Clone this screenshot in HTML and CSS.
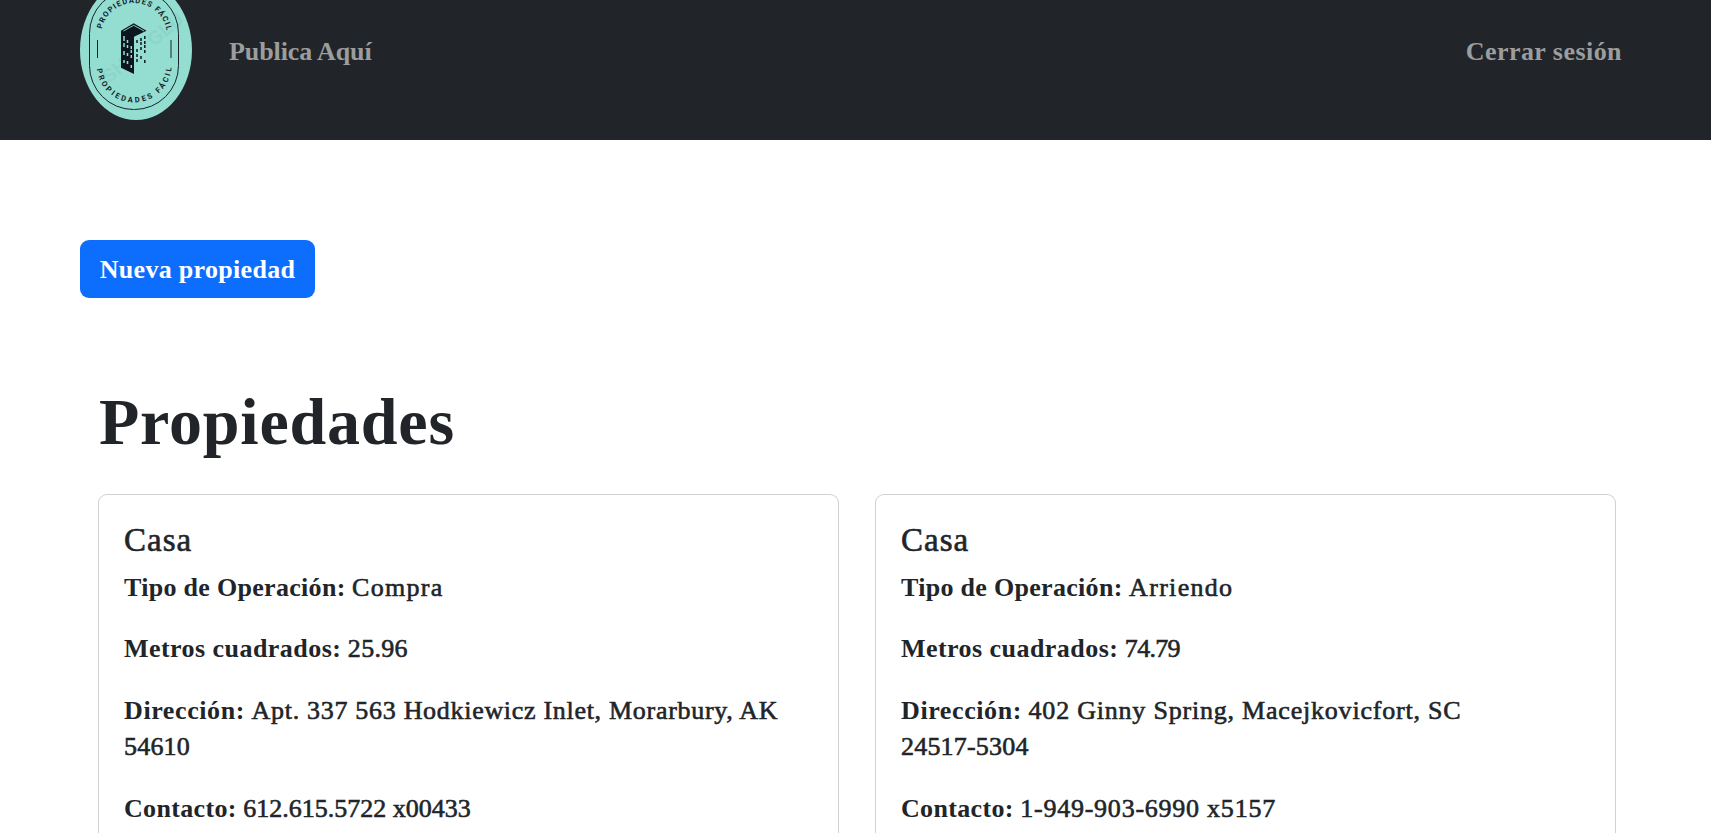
FILE: index.html
```html
<!DOCTYPE html>
<html lang="es">
<head>
<meta charset="utf-8">
<title>Propiedades</title>
<link rel="stylesheet" href="styles.css">
</head>
<body>
<nav class="navbar">
  <a class="brand" href="#">
    <svg class="logo" viewBox="80 -20 112 140" role="img" aria-label="Propiedades Fácil">
      <defs>
        <path id="arc-top" d="M101 36A33 33 0 0 1 167 36"/>
        <path id="arc-bottom" d="M96.500 65A37.500 37.500 0 0 0 171.500 65"/>
      </defs>
      <ellipse cx="136" cy="50" rx="56" ry="70" fill="#94ddd1"/>
      <text class="watermark" transform="translate(109 84) rotate(-40)">SH</text>
      <text class="watermark" transform="translate(154 47) rotate(-40)">GLU</text>
      <rect x="89.500" y="-10.500" width="89" height="120" rx="44" fill="none" stroke="#16242c"/>
      <path d="M97.500 40v18M171 40v18" stroke="#16242c"/>
      <text class="logo-text"><textPath href="#arc-top" startOffset="7" textLength="91">PROPIEDADES FÁCIL</textPath></text>
      <text class="logo-text"><textPath href="#arc-bottom" startOffset="4" textLength="111">PROPIEDADES FÁCIL</textPath></text>
      <path d="M121 30.700 133.700 23.300 146.500 30.700 134 36.700V74L121 67.700Z" fill="#0d1520"/>
      <path d="M123.500 31 133.700 25.300 144 31" fill="none" stroke="#94ddd1" stroke-width=".9"/>
      <path d="M124 36v5M124 43v4M124 51v4M124 60v3M127.500 40v3M127.500 45v3M127.500 53v3M127.500 61v3M131.300 46v3M131.300 50v3M131.300 55v3M131.300 65v3" stroke="#94ddd1" stroke-width="1.500"/>
      <path d="M137 40v3M137 49v3M137 54v3M137 59v3M141 38v3M141 42v3M141 47v3M141 56v3M144.800 36v3M144.800 41v3M144.800 45v3M144.800 50v3M144.800 60v3" stroke="#0d1520" stroke-width="1.500"/>
    </svg>
  </a>
  <a class="nav-link publish" href="#">Publica Aquí</a>
  <a class="nav-link logout" href="#">Cerrar sesión</a>
</nav>
<main class="page">
  <a class="button" href="#">Nueva propiedad</a>
  <section class="listing">
    <h1 class="title">Propiedades</h1>
    <div class="cards">
      <article class="card">
        <h2 class="card-title">Casa</h2>
        <p class="field operation"><b>Tipo de Operación:</b> <span>Compra</span></p>
        <p class="field area"><b>Metros cuadrados:</b> <span>25.96</span></p>
        <p class="field address"><b>Dirección:</b> <span>Apt. 337 563 Hodkiewicz Inlet, Morarbury, AK</span><br><span class="zip">54610</span></p>
        <p class="field contact"><b>Contacto:</b> <span>612.615.5722 x00433</span></p>
      </article>
      <article class="card">
        <h2 class="card-title">Casa</h2>
        <p class="field operation"><b>Tipo de Operación:</b> <span>Arriendo</span></p>
        <p class="field area"><b>Metros cuadrados:</b> <span class="tight">74.79</span></p>
        <p class="field address"><b>Dirección:</b> <span class="loose">402 Ginny Spring, Macejkovicfort, SC</span><br><span class="zip">24517-5304</span></p>
        <p class="field contact"><b>Contacto:</b> <span class="wide">1-949-903-6990 x5157</span></p>
      </article>
    </div>
  </section>
</main>
</body>
</html>
```
FILE: styles.css
```css
* { box-sizing: border-box; }
body {
  display: flex;
  flex-direction: column;
  height: 100vh;
  margin: 0;
  overflow: hidden;
  background: #fff;
  color: #212529;
  font: 26px/36.75px "Liberation Serif", serif;
  -webkit-text-stroke: .6px currentColor;
}
a { text-decoration: none; }
.navbar {
  display: flex;
  flex: none;
  align-items: center;
  height: 180px;
  margin-top: -40px;
  padding: 0 89px 0 80px;
  background: #212529;
}
.brand { display: flex; margin-right: 37px; }
.logo { width: 112px; height: 140px; -webkit-text-stroke: 0; }
.logo-text { font: 700 7.6px Roboto, sans-serif; fill: #16242c; }
.watermark { font: 700 19px "Liberation Sans", sans-serif; fill: #87cfc3; opacity: .5; }
.nav-link {
  padding-top: 4px;
  color: #9b9d9e;
  font-weight: 700;
  -webkit-text-stroke: 0;
}
.publish { letter-spacing: -.1px; }
.logout { margin-left: auto; letter-spacing: .45px; }
.page {
  display: flex;
  flex: 1;
  flex-direction: column;
  min-height: 0;
  padding: 100px 80px 0;
}
.button {
  display: flex;
  flex: none;
  align-items: center;
  justify-content: center;
  width: 235px;
  height: 58px;
  padding-top: 2px;
  border-radius: 9px;
  background: #0d6efd;
  color: #fff;
  font-weight: 700;
  letter-spacing: .3px;
  -webkit-text-stroke: 0;
}
.listing {
  display: flex;
  flex: 1;
  flex-direction: column;
  min-height: 0;
  padding: 86px 15px 0 18px;
}
.title {
  margin: 0 0 34px 1px;
  font-size: 66px;
  font-weight: 700;
  line-height: 76px;
  letter-spacing: .8px;
  -webkit-text-stroke: 0;
}
.cards {
  display: grid;
  flex: 1;
  grid-template-columns: 1fr 1fr;
  gap: 36px;
  min-height: 0;
}
.card {
  min-height: 0;
  padding: 27px 25px 0;
  overflow: hidden;
  border: 1px solid #d0d1d2;
  border-bottom: 0;
  border-radius: 9px 9px 0 0;
}
.card-title {
  margin: 0 0 11px;
  font-size: 33px;
  font-weight: 400;
  line-height: 37px;
  letter-spacing: 1px;
}
.field { margin: 0 0 24.5px; }
.field:last-child { margin-bottom: 0; }
.field b { font-weight: 700; -webkit-text-stroke: 0; }
.operation b { letter-spacing: .3px; }
.operation span { letter-spacing: 1.3px; }
.area b { letter-spacing: .45px; }
.area span { letter-spacing: .3px; }
.area .tight { letter-spacing: -.7px; }
.address b { letter-spacing: .6px; }
.address span { letter-spacing: .7px; }
.address .loose { letter-spacing: .79px; }
.address .zip { letter-spacing: .2px; }
.contact b { letter-spacing: .33px; }
.contact .wide { letter-spacing: .76px; }
```
